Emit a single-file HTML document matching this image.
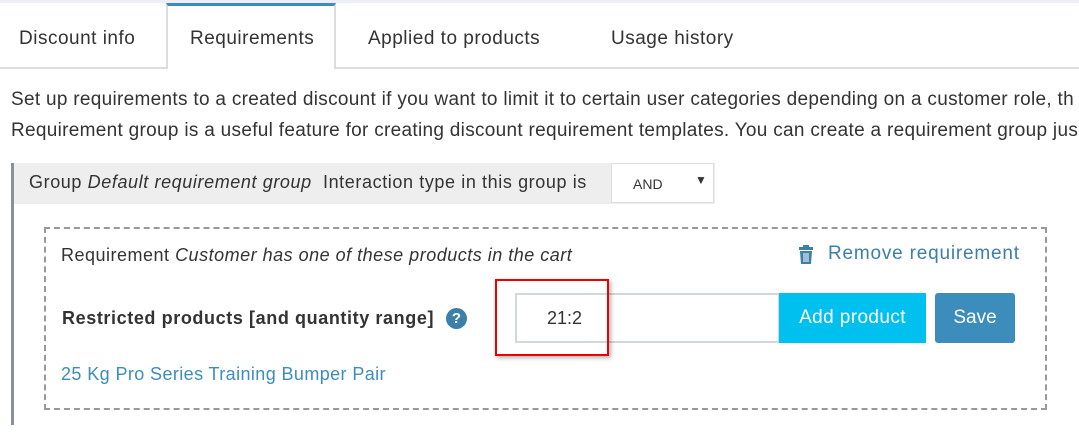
<!DOCTYPE html>
<html><head><style>
body{margin:0;width:1079px;height:435px;overflow:hidden;background:#fff;font-family:"Liberation Sans",sans-serif;color:#333;position:relative}
div,span{position:absolute;white-space:nowrap}
.t{font-size:19px;top:28px;letter-spacing:0.5px}
.p{font-size:19px;left:11px;letter-spacing:0.3px}
</style></head><body>
<div style="left:0;top:0;width:1079px;height:3px;background:#ecf0f5"></div>
<div style="left:0;top:67px;width:1079px;height:2px;background:#ddd"></div>
<div style="left:166px;top:3px;width:170px;height:66px;background:#fff;border-left:2px solid #ddd;border-right:2px solid #ddd;border-top:3px solid #3c8dbc;box-sizing:border-box"></div>
<div class="t" style="left:19px">Discount info</div>
<div class="t" style="left:190px">Requirements</div>
<div class="t" style="left:368px">Applied to products</div>
<div class="t" style="left:611px">Usage history</div>
<div class="p" style="top:89px">Set up requirements to a created discount if you want to limit it to certain user categories depending on a customer role, th</div>
<div class="p" style="top:120px">Requirement group is a useful feature for creating discount requirement templates. You can create a requirement group jus</div>
<div style="left:11px;top:163px;width:3px;height:262px;background:#8a9099"></div>
<div style="left:14px;top:163px;width:701px;height:41px;background:#eee"></div>
<div style="left:29px;top:172px;font-size:18px;letter-spacing:0.6px">Group <i>Default requirement group</i>&nbsp; Interaction type in this group is</div>
<div style="left:611px;top:163px;width:103px;height:40px;background:#fff;border:1px solid #ddd;box-sizing:border-box"></div>
<div style="left:633px;top:176px;font-size:14px">AND</div>
<div style="left:695px;top:173px;font-size:12px">▼</div>
<div style="left:44px;top:227px;width:1003px;height:183px;border:2px dashed #999;box-sizing:border-box"></div>
<div style="left:61px;top:245px;font-size:18px;letter-spacing:0.5px">Requirement <i>Customer has one of these products in the cart</i></div>
<svg style="position:absolute;left:798px;top:245px" width="16" height="20" viewBox="0 0 16 20"><rect x="1" y="2" width="14" height="3" fill="#3c7fa8"/><rect x="5" y="0" width="6" height="3" fill="#3c7fa8"/><path d="M2 6h12l-1 13H3z" fill="#3c7fa8"/><path d="M6 8v9M8 8v9M10 8v9" stroke="#fff" stroke-width="1"/></svg>
<div style="left:828px;top:243px;font-size:19px;letter-spacing:0.8px;color:#3c7fa8">Remove requirement</div>
<div style="left:62px;top:308px;font-size:18px;letter-spacing:0.6px;font-weight:bold">Restricted products [and quantity range]</div>
<div style="left:446px;top:308px;width:21px;height:21px;border-radius:50%;background:#3c7fa8;color:#fff;font-weight:bold;font-size:15px;text-align:center;line-height:21px">?</div>
<div style="left:515px;top:293px;width:265px;height:50px;border:2px solid #d2d6de;box-sizing:border-box;background:#fff"></div>
<div style="left:547px;top:308px;font-size:18px">21:2</div>
<div style="left:779px;top:293px;width:147px;height:50px;background:#00c0ef;color:#fff;font-size:19px;letter-spacing:0.4px;text-align:center;line-height:50px">Add product</div>
<div style="left:935px;top:293px;width:80px;height:50px;background:#3c8dbc;border-radius:3px;color:#fff;font-size:19px;text-align:center;line-height:50px">Save</div>
<div style="left:495px;top:279px;width:114px;height:77px;border:2px solid #e00;box-sizing:border-box;box-shadow:2px 2px 4px rgba(0,0,0,.3)"></div>
<div style="left:61px;top:364px;font-size:18px;letter-spacing:0.4px;color:#3c8dbc">25 Kg Pro Series Training Bumper Pair</div>
</body></html>
